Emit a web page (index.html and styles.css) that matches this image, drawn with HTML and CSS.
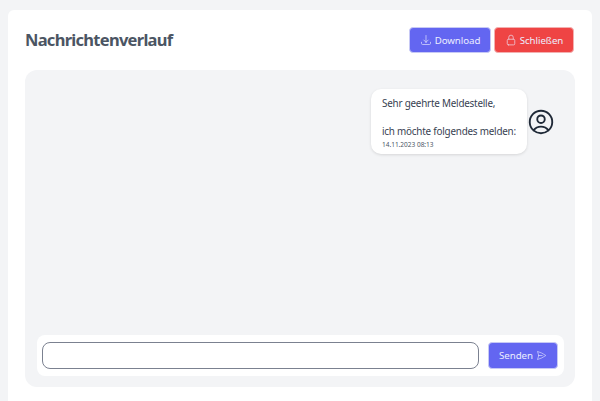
FILE: index.html
```html
<!DOCTYPE html>
<html lang="de">
<head>
<meta charset="utf-8">
<title>Nachrichtenverlauf</title>
<link rel="stylesheet" href="styles.css">
</head>
<body>
<main class="card">
  <header class="head">
    <h1 class="title">Nachrichtenverlauf</h1>
    <div class="actions">
      <button class="btn btn-primary btn-download" type="button">
        <svg class="ico" viewBox="0 0 24 24" fill="none" stroke="currentColor" stroke-width="1.5" stroke-linecap="round" stroke-linejoin="round"><path d="M3 16.5v2.25A2.25 2.25 0 0 0 5.25 21h13.5A2.25 2.25 0 0 0 21 18.75V16.5M16.5 12 12 16.5m0 0L7.5 12m4.5 4.5V3"/></svg>
        Download
      </button>
      <button class="btn btn-danger" type="button">
        <svg class="ico" viewBox="0 0 24 24" fill="none" stroke="currentColor" stroke-width="1.5" stroke-linecap="round" stroke-linejoin="round"><path d="M16.5 10.5V6.75a4.5 4.5 0 1 0-9 0v3.75m-.75 11.25h10.5a2.25 2.25 0 0 0 2.25-2.25v-6.75a2.25 2.25 0 0 0-2.25-2.25H6.75a2.25 2.25 0 0 0-2.25 2.25v6.75a2.25 2.25 0 0 0 2.25 2.25Z"/></svg>
        Schließen
      </button>
    </div>
  </header>
  <section class="panel">
    <div class="messages">
      <div class="message">
        <div class="bubble">
          <p class="text">Sehr geehrte Meldestelle,</p>
          <p class="text gap">ich möchte folgendes melden:</p>
          <time class="stamp">14.11.2023 08:13</time>
        </div>
        <svg class="avatar" viewBox="0 0 24 24" fill="none" stroke="currentColor" stroke-width="1.5" stroke-linecap="round" stroke-linejoin="round"><path d="M17.982 18.725A7.488 7.488 0 0 0 12 15.75a7.488 7.488 0 0 0-5.982 2.975m11.964 0a9 9 0 1 0-11.963 0m11.963 0A8.966 8.966 0 0 1 12 21a8.966 8.966 0 0 1-5.982-2.275M15 9.75a3 3 0 1 1-6 0 3 3 0 0 1 6 0Z"/></svg>
      </div>
    </div>
    <form class="composer">
      <input class="field" type="text" aria-label="Nachricht">
      <button class="btn btn-primary btn-send" type="button">
        Senden
        <svg class="ico ico-send" viewBox="0 0 24 24" fill="none" stroke="currentColor" stroke-width="1.5" stroke-linecap="round" stroke-linejoin="round"><path d="M6 12 3.269 3.125A59.769 59.769 0 0 1 21.485 12 59.768 59.768 0 0 1 3.27 20.875L5.999 12Zm0 0h7.5"/></svg>
      </button>
    </form>
  </section>
</main>
</body>
</html>
```
FILE: styles.css
```css
* { box-sizing: border-box; }
html, body { height: 100%; }
body {
  margin: 0;
  padding: 10px 8px 0;
  background: #f3f4f6;
  font-family: "Noto Sans", "Open Sans", sans-serif;
  overflow: hidden;
}
.card {
  background: #fff;
  border-radius: 6px 6px 0 0;
  padding: 17px 17px 14px;
  height: 391px;
  display: flex;
  flex-direction: column;
}
.head {
  display: flex;
  justify-content: space-between;
  align-items: center;
  height: 26px;
  margin-bottom: 17px;
}
.title {
  margin: 0;
  font-size: 16.5px;
  font-weight: 700;
  letter-spacing: -0.72px;
  color: #4b5563;
  line-height: 26px;
}
.actions { display: flex; gap: 3px; margin-right: 1px; }
.btn {
  display: inline-flex;
  align-items: center;
  justify-content: center;
  border: 1px solid #c7c9f5;
  border-radius: 4px;
  color: #eceeff;
  font: inherit;
  font-size: 9.7px;
  letter-spacing: -0.05px;
  padding: 0;
  height: 26px;
  gap: 3px;
}
.btn-primary { background: #6366f1; }
.btn-danger { background: #ef4444; width: 80px; border-color: #f3b0b0; }
.btn-download { width: 82px; }
.ico { width: 12px; height: 12px; flex: none; opacity: .85; }
.panel {
  flex: 1;
  background: #f3f4f6;
  border-radius: 12px;
  padding: 19px 11px 11px 12px;
  display: flex;
  flex-direction: column;
}
.messages { flex: 1; }
.message {
  display: flex;
  justify-content: flex-end;
  align-items: center;
  padding-right: 8px;
}
.bubble {
  width: 156px;
  height: 65px;
  background: #fff;
  border-radius: 10px;
  padding: 7px 11px;
  box-shadow: 0 1px 3px rgba(0,0,0,.12);
  color: #374151;
}
.text {
  margin: 0;
  font-size: 9.9px;
  letter-spacing: -0.22px;
  line-height: 14px;
  white-space: nowrap;
}
.gap { margin-top: 14px; }
.stamp {
  display: block;
  font-size: 6.5px;
  line-height: 9px;
  margin-top: 2px;
  color: #4b5563;
}
.avatar { width: 30px; height: 30px; color: #1f2937; flex: none; margin-left: -1px; }
.composer {
  height: 41px;
  background: #fff;
  border-radius: 8px;
  padding: 7px 6px 7px 5px;
  display: flex;
  align-items: center;
  gap: 9px;
}
.field {
  flex: 1;
  min-width: 0;
  height: 27px;
  border: 1px solid #7b8190;
  border-radius: 8px;
  background: #fff;
  outline: none;
}
.btn-send { width: 70px; height: 27px; }
.ico-send { width: 11px; height: 11px; }
```
